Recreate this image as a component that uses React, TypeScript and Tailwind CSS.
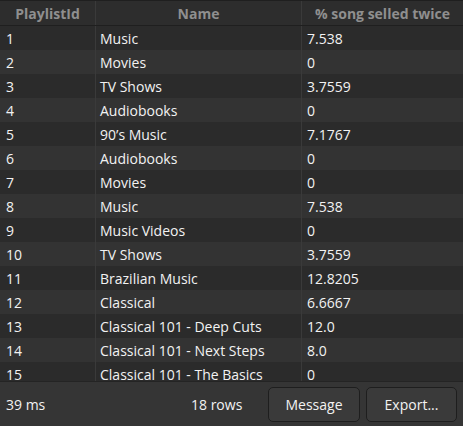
import React from "react";

const rows: [string, string, string][] = [
  ["1", "Music", "7.538"],
  ["2", "Movies", "0"],
  ["3", "TV Shows", "3.7559"],
  ["4", "Audiobooks", "0"],
  ["5", "90’s Music", "7.1767"],
  ["6", "Audiobooks", "0"],
  ["7", "Movies", "0"],
  ["8", "Music", "7.538"],
  ["9", "Music Videos", "0"],
  ["10", "TV Shows", "3.7559"],
  ["11", "Brazilian Music", "12.8205"],
  ["12", "Classical", "6.6667"],
  ["13", "Classical 101 - Deep Cuts", "12.0"],
  ["14", "Classical 101 - Next Steps", "8.0"],
  ["15", "Classical 101 - The Basics", "0"],
  ["16", "Grunge", "0"],
];

export default function App() {
  return (
    <div
      className="w-[463px] h-[426px] bg-[#353535] text-[#f2f2f2] flex flex-col overflow-hidden"
      style={{ fontFamily: '"Open Sans", "Noto Sans", sans-serif' }}
    >
      <div className="h-[381px] overflow-hidden bg-[#2b2b2b] border-t border-[#1f1f1f] flex flex-col">
        <div className="grid grid-cols-[96px_206px_1fr] h-[25px] shrink-0 bg-[#2d2d2d] border-b border-[#1f1f1f] text-[#8f8f8f] font-bold text-[14px]">
          <div className="flex items-center justify-center border-r border-[#3a3a3a]">PlaylistId</div>
          <div className="flex items-center justify-center border-r border-[#3a3a3a]">Name</div>
          <div className="flex items-center justify-center">% song selled twice</div>
        </div>
        {rows.map((r, i) => (
          <div
            key={i}
            className={`grid grid-cols-[96px_206px_1fr] h-[24px] shrink-0 text-[14px] ${
              i % 2 === 0 ? "bg-[#2b2b2b]" : "bg-[#333333]"
            }`}
          >
            <div className="flex items-center pl-[6px] border-r border-[#3a3a3a]">{r[0]}</div>
            <div className="flex items-center pl-[4px] border-r border-[#3a3a3a]">{r[1]}</div>
            <div className="flex items-center pl-[5px]">{r[2]}</div>
          </div>
        ))}
      </div>
      <div className="flex-1 border-t border-[#242424] flex items-center pl-[6px] pr-[6px] text-[14px]">
        <div className="w-[185px]">39 ms</div>
        <div className="w-[77px]">18 rows</div>
        <button className="w-[92px] h-[35px] rounded-[5px] bg-[#3a3a3a] border border-[#1e1e1e] text-[#f2f2f2]">
          Message
        </button>
        <button className="ml-[6px] w-[91px] h-[35px] rounded-[5px] bg-[#3a3a3a] border border-[#1e1e1e] text-[#f2f2f2]">
          Export...
        </button>
      </div>
    </div>
  );
}
